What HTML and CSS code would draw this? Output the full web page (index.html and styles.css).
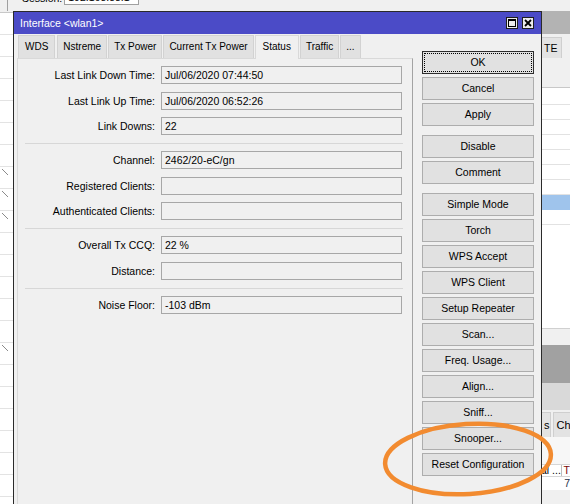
FILE: index.html
```html
<!DOCTYPE html>
<html>
<head>
<meta charset="utf-8">
<title>Interface wlan1</title>
<link rel="stylesheet" href="styles.css">
</head>
<body>
<div class="desk">
  <div class="session">
    <div class="sess-left"></div>
    <span class="sess-label">Session:</span>
    <span class="sess-box">192.168.88.1</span>
  </div>
  <div class="back">
    <div class="leftlist">
      <div class="lrow first"></div>
      <div class="lrow"></div>
      <div class="lrow"></div>
      <div class="lrow"></div>
      <div class="lrow"></div>
      <div class="lrow"></div>
      <div class="lrow"></div>
      <div class="lrow"></div>
      <div class="lrow"><span class="mark"></span></div>
      <div class="lrow"><span class="mark"></span></div>
      <div class="lrow"><span class="mark"></span></div>
      <div class="lrow"></div>
      <div class="lrow"></div>
      <div class="lrow"></div>
      <div class="lrow"></div>
      <div class="lrow"></div>
      <div class="lrow"><span class="mark"></span></div>
      <div class="lrow"></div>
      <div class="lrow"></div>
      <div class="lrow"></div>
      <div class="lrow"></div>
      <div class="lrow"></div>
      <div class="lrow"></div>
    </div>
    <div class="spacer"></div>
    <div class="rightpane">
      <div class="rp-title"></div>
      <div class="rp-tabs"><span class="rtab te">TE</span></div>
      <div class="rp-tool"></div>
      <div class="rp-list">
        <div class="rrow head"></div>
        <div class="rrow"></div>
        <div class="rrow"></div>
        <div class="rrow"></div>
        <div class="rrow"></div>
        <div class="rrow"></div>
        <div class="rrow"></div>
        <div class="rrow sel"></div>
        <div class="rrow"></div>
      </div>
      <div class="rp-scroll"></div>
      <div class="rp-dark"></div>
      <div class="rp-mid"></div>
      <div class="rp-tabs2"><span class="rtab s">s</span><span class="rtab ch">Ch</span></div>
      <div class="rp-blank"></div>
      <div class="rp-thead"><span class="th1">al ...</span><span class="th2">T</span></div>
      <div class="rp-trow"><span class="td1"></span><span class="td2">7</span></div>
    </div>
  </div>

  <div class="dialog">
    <div class="titlebar">
      <span class="title">Interface &lt;wlan1&gt;</span>
      <span class="tbtns">
        <span class="tbtn">
          <svg width="12" height="12" viewBox="0 0 12 12"><rect x="0.5" y="0.5" width="11" height="11" fill="#ececec" stroke="#1e1e1e"/><rect x="2.5" y="2.5" width="7" height="7" fill="none" stroke="#000"/><line x1="2" y1="3.5" x2="10" y2="3.5" stroke="#000" stroke-width="1"/></svg>
        </span>
        <span class="tbtn">
          <svg width="12" height="12" viewBox="0 0 12 12"><rect x="0.5" y="0.5" width="11" height="11" fill="#ececec" stroke="#1e1e1e"/><path d="M3 3 L9 9 M9 3 L3 9" stroke="#000" stroke-width="1.8"/></svg>
        </span>
      </span>
    </div>
    <div class="dbody">
      <div class="tabarea">
        <div class="tabs">
          <span class="tab first">WDS</span>
          <span class="tab">Nstreme</span>
          <span class="tab">Tx Power</span>
          <span class="tab">Current Tx Power</span>
          <span class="tab active">Status</span>
          <span class="tab">Traffic</span>
          <span class="tab">...</span>
        </div>
        <div class="frame">
          <div class="section">
            <div class="row"><span class="lbl">Last Link Down Time:</span><span class="val">Jul/06/2020 07:44:50</span></div>
            <div class="row"><span class="lbl">Last Link Up Time:</span><span class="val">Jul/06/2020 06:52:26</span></div>
            <div class="row"><span class="lbl">Link Downs:</span><span class="val">22</span></div>
          </div>
          <div class="sep"></div>
          <div class="section">
            <div class="row"><span class="lbl">Channel:</span><span class="val">2462/20-eC/gn</span></div>
            <div class="row"><span class="lbl">Registered Clients:</span><span class="val"></span></div>
            <div class="row"><span class="lbl">Authenticated Clients:</span><span class="val"></span></div>
          </div>
          <div class="sep"></div>
          <div class="section">
            <div class="row"><span class="lbl">Overall Tx CCQ:</span><span class="val">22 %</span></div>
            <div class="row"><span class="lbl">Distance:</span><span class="val"></span></div>
          </div>
          <div class="sep"></div>
          <div class="section">
            <div class="row"><span class="lbl">Noise Floor:</span><span class="val">-103 dBm</span></div>
          </div>
        </div>
      </div>
      <div class="btns">
        <div class="group">
          <div class="btn default">OK</div>
          <div class="btn">Cancel</div>
          <div class="btn">Apply</div>
        </div>
        <div class="group">
          <div class="btn">Disable</div>
          <div class="btn">Comment</div>
        </div>
        <div class="group">
          <div class="btn">Simple Mode</div>
          <div class="btn">Torch</div>
          <div class="btn">WPS Accept</div>
          <div class="btn">WPS Client</div>
          <div class="btn">Setup Repeater</div>
          <div class="btn">Scan...</div>
          <div class="btn">Freq. Usage...</div>
          <div class="btn">Align...</div>
          <div class="btn">Sniff...</div>
          <div class="btn">Snooper...</div>
          <div class="btn">Reset Configuration</div>
        </div>
      </div>
    </div>
  </div>

  <svg class="annot" width="570" height="504" viewBox="0 0 570 504">
    <ellipse cx="468" cy="459" rx="83" ry="35" transform="rotate(-3.5 468 459)" fill="none" stroke="#f28b30" stroke-width="4.5"/>
  </svg>
</div>
</body>
</html>
```

FILE: styles.css
```css
* {
  box-sizing: border-box;
  margin: 0;
  padding: 0;
}

html, body {
  width: 570px;
  height: 504px;
  overflow: hidden;
}

body {
  background: #f0f0f0;
  font-family: "Liberation Sans", Arial, sans-serif;
  font-size: 10.5px;
  color: #000;
}

.desk {
  position: relative;
  width: 570px;
  height: 504px;
  overflow: hidden;
  background: #f0f0f0;
}

/* top session bar (mostly cut off) */
.session {
  height: 11px;
  display: flex;
  align-items: flex-start;
  overflow: hidden;
  background: #f0f0f0;
}

.sess-left {
  width: 8px;
  height: 11px;
  border-right: 1px solid #a0a0a0;
}

.sess-label {
  margin-left: 14px;
  margin-top: -8px;
  line-height: 12px;
}

.sess-box {
  margin-left: 2px;
  margin-top: -11px;
  width: 75px;
  height: 16px;
  border: 1px solid #a0a0a0;
  background: #fff;
  padding: 0 3px;
  line-height: 14px;
}

/* background window */
.back {
  display: flex;
  height: 493px;
}

.leftlist {
  width: 13px;
  background: #fff;
  display: flex;
  flex-direction: column;
}

.lrow {
  height: 22px;
  flex: none;
  border-bottom: 1px solid #e3e3e3;
  display: flex;
  align-items: flex-start;
}

.lrow.first {
  height: 2px;
  background: #f0f0f0;
  border-bottom-color: #c8c8c8;
}

.mark {
  width: 6px;
  height: 6px;
  margin: 2px 0 0 2px;
  background: linear-gradient(45deg, transparent 44%, #8a8a8a 46%, #8a8a8a 56%, transparent 58%);
}

.spacer {
  width: 528px;
  flex: none;
}

.rightpane {
  width: 29px;
  flex: none;
  display: flex;
  flex-direction: column;
  background: #f0f0f0;
}

.rp-title {
  height: 23px;
  background: #b3b3b3;
}

.rp-tabs {
  height: 24px;
  display: flex;
  align-items: flex-end;
}

.rtab {
  height: 21px;
  line-height: 20px;
  background: #e3e3e3;
  border: 1px solid #cfcfcf;
  border-bottom: none;
  white-space: nowrap;
}

.rtab.te {
  padding: 0 4px 0 2px;
}

.rp-tool {
  height: 30px;
  border-bottom: 1px solid #c8c8c8;
}

.rp-list {
  height: 240px;
  background: #fff;
}

.rrow {
  height: 15px;
  border-bottom: 1px solid #e2e2e2;
}

.rrow.head {
  height: 17px;
}

.rrow.sel {
  background: #9fc4ec;
  border-bottom-color: #9fc4ec;
}

.rp-scroll {
  height: 17px;
  border-top: 1px solid #d0d0d0;
  background: #f0f0f0;
}

.rp-dark {
  height: 38px;
  background: #a1a1a1;
}

.rp-mid {
  height: 27px;
  background: #d9d9d9;
}

.rp-tabs2 {
  height: 27px;
  display: flex;
  align-items: flex-end;
  gap: 2px;
  background: #f0f0f0;
}

.rp-tabs2 .rtab {
  height: 25px;
  line-height: 24px;
  font-size: 11px;
}

.rtab.s {
  width: 12px;
  padding-left: 2px;
}

.rtab.ch {
  padding-left: 3px;
  flex: 1;
}

.rp-blank {
  height: 27px;
  background: #f7f7f7;
}

.rp-thead {
  height: 13px;
  display: flex;
  background: #fff;
  border-top: 1px solid #d6d6d6;
  border-bottom: 1px solid #d6d6d6;
  line-height: 11px;
}

.th1 {
  width: 22px;
  border-right: 1px solid #bdbdbd;
  white-space: nowrap;
  overflow: hidden;
}

.th2 {
  padding-left: 2px;
  color: #7a0a0a;
}

.rp-trow {
  height: 13px;
  display: flex;
  background: #fff;
  line-height: 12px;
}

.td1 {
  width: 22px;
}

.td2 {
  padding-left: 2px;
  color: #22304a;
}

/* front dialog */
.dialog {
  position: absolute;
  left: 13px;
  top: 11px;
  width: 529px;
  height: 500px;
  border: 1px solid #2a2a2a;
  border-bottom: none;
  background: #f0f0f0;
  display: flex;
  flex-direction: column;
}

.titlebar {
  height: 22px;
  flex: none;
  background: #4b4bc7;
  color: #fff;
  display: flex;
  align-items: center;
  padding-left: 6px;
}

.title {
  font-size: 10.5px;
}

.tbtns {
  margin-left: auto;
  margin-right: 7px;
  display: flex;
  gap: 4px;
}

.tbtn {
  width: 12px;
  height: 12px;
  display: block;
}

.tbtn svg {
  display: block;
}

.dbody {
  flex: 1;
  display: flex;
  padding: 1px 0 0 3px;
}

.tabarea {
  width: 396px;
  flex: none;
  display: flex;
  flex-direction: column;
}

.tabs {
  height: 23px;
  flex: none;
  display: flex;
  align-items: flex-end;
  gap: 1px;
  padding-left: 1px;
}

.tab {
  height: 23px;
  padding: 0 5px;
  font-size: 10px;
  line-height: 22px;
  background: #e1e1e1;
  border: 1px solid #d2d2d2;
  border-bottom: none;
  white-space: nowrap;
}

.tab.first {
  padding: 0 6px;
  margin-right: 1px;
}

.tab.active {
  background: #f0f0f0;
  border-color: #d9d9d9;
  height: 24px;
  margin-bottom: -1px;
  position: relative;
  z-index: 1;
  padding: 0 7px;
}

.frame {
  flex: 1;
  border: 1px solid #d9d9d9;
  border-right-color: #a3a3a3;
  border-bottom: none;
  background: #f0f0f0;
  padding-top: 7px;
}

.section {
  display: flex;
  flex-direction: column;
  gap: 7.5px;
  padding-bottom: 8px;
}

.row {
  display: flex;
  align-items: center;
  height: 18px;
}

.lbl {
  width: 137px;
  text-align: right;
  white-space: nowrap;
}

.val {
  margin-left: 6px;
  width: 241px;
  height: 18px;
  border: 1px solid #a7a7a7;
  background: #f0f0f0;
  padding: 0 3px;
  line-height: 16px;
  white-space: nowrap;
}

.sep {
  height: 1px;
  background: #d7d7d7;
  margin: 0 9px 7px 7px;
}

.btns {
  width: 112px;
  flex: none;
  margin-left: 9px;
  padding-top: 16px;
  display: flex;
  flex-direction: column;
  gap: 9px;
}

.group {
  display: flex;
  flex-direction: column;
  gap: 3px;
}

.btn {
  height: 23px;
  border: 1px solid #adadad;
  background: #e1e1e1;
  text-align: center;
  line-height: 21px;
  white-space: nowrap;
}

.btn.default {
  border-color: #2d2d2d;
  outline: 1px dotted #000;
  outline-offset: -3px;
}

.annot {
  position: absolute;
  left: 0;
  top: 0;
  pointer-events: none;
}
```
